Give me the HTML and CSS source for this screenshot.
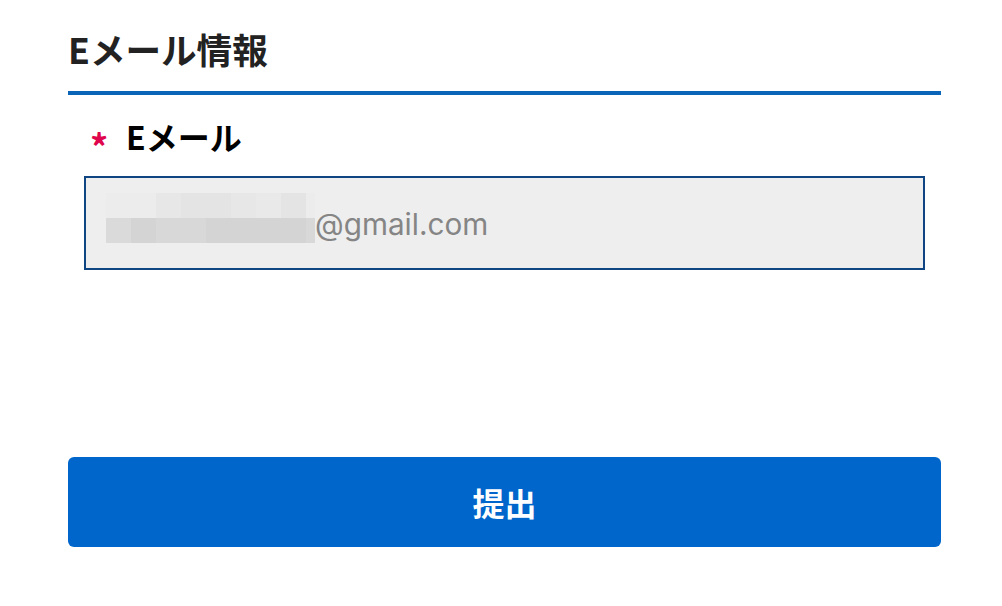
FILE: index.html
```html
<!DOCTYPE html>
<html lang="ja">
<head>
<meta charset="utf-8">
<link rel="stylesheet" href="styles.css">
</head>
<body>
<main class="form">
  <h2 class="section-title">Eメール情報</h2>
  <div class="field">
    <label class="field-label"><span class="req">*</span><span>Eメール</span></label>
    <div class="input">
      <div class="mosaic">
        <i class="c s0"></i><i class="c s0"></i><i class="c s2"></i><i class="c s3"></i><i class="c s3"></i><i class="c s2"></i><i class="c s1"></i><i class="c s3"></i><i class="c e s0"></i>
        <i class="c s5"></i><i class="c s7"></i><i class="c s6"></i><i class="c s6"></i><i class="c s7"></i><i class="c s7"></i><i class="c s7"></i><i class="c s7"></i><i class="c e s6"></i>
      </div>
      <span class="value">@gmail.com</span>
    </div>
  </div>
  <button class="submit">提出</button>
</main>
</body>
</html>
```
FILE: styles.css
```css
html, body {
  margin: 0;
  padding: 0;
  background: #ffffff;
}
body {
  font-family: "Noto Sans CJK JP", "Noto Sans", sans-serif;
}
.form {
  display: flex;
  flex-direction: column;
  margin: 0 61px 0 68px;
  padding-top: 22px;
}
.section-title {
  margin: 0;
  font-size: 35.6px;
  line-height: 54px;
  font-weight: 700;
  color: #222222;
  padding-bottom: 15px;
  border-bottom: 4px solid #0a64b8;
}
.field {
  display: flex;
  flex-direction: column;
  margin-top: 17px;
}
.field-label {
  display: flex;
  align-items: flex-start;
  height: 48px;
  font-size: 32px;
  line-height: 48px;
  font-weight: 700;
  color: #000000;
  padding-left: 22px;
}
.req {
  color: #e0064d;
  font-size: 36px;
  line-height: 48px;
  width: 36px;
  position: relative;
  top: 9px;
}
.input {
  margin: 16px 16px 0 16px;
  height: 90px;
  border: 2px solid #0f4583;
  background: #eeeeee;
  display: flex;
  align-items: center;
  padding-left: 20px;
}
.mosaic {
  display: grid;
  grid-template-columns: repeat(8, 25px) 9px;
  grid-template-rows: 25px 25px;
  margin-top: -10px;
}
.c { display: block; }
.s0 { background: #ececec; }
.s1 { background: #e9e9e9; }
.s2 { background: #e7e7e7; }
.s3 { background: #e4e4e4; }
.s5 { background: #dadada; }
.s6 { background: #d8d8d8; }
.s7 { background: #d4d4d4; }
.value {
  font-family: "Inter", "Roboto", sans-serif;
  font-size: 29.7px;
  color: #858585;
  margin-top: 2px;
}
.submit {
  margin-top: 187px;
  height: 90px;
  border: none;
  border-radius: 6px;
  background: #0066cc;
  color: #ffffff;
  font-family: "Noto Sans CJK JP", "Noto Sans", sans-serif;
  font-size: 32px;
  font-weight: 700;
  cursor: pointer;
}
```
